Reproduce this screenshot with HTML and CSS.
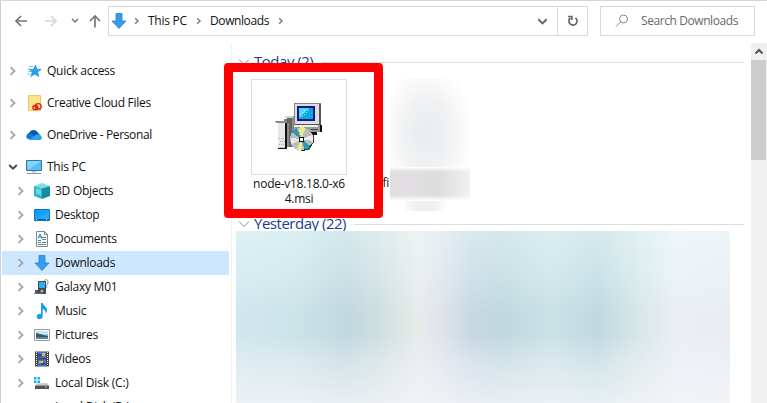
FILE: index.html
```
<!DOCTYPE html>
<html lang="en">
<head>
<meta charset="utf-8">
<title>Downloads</title>
<link rel="stylesheet" href="styles.css">
</head>
<body>
<svg class="defs" width="0" height="0">
  <defs>
    <linearGradient id="blue" x1="0" y1="0" x2="1" y2="1"><stop offset="0" stop-color="#0795f2"/><stop offset="1" stop-color="#32b0ff"/></linearGradient>
    <symbol id="down" viewBox="0 0 16 16"><path d="M5 .5h6v7.500h4L8 15.500 1 8h4z" fill="#389bea" stroke="#2181d3" stroke-width=".8"/></symbol>
    <symbol id="chev" viewBox="0 0 8 10"><path d="M1.500 1.200 5.500 5l-4 3.800" fill="none" stroke="currentColor" stroke-width="1.800"/></symbol>
    <symbol id="chevd" viewBox="0 0 10 8"><path d="M1.200 2 5 5.700 8.800 2" fill="none" stroke="currentColor" stroke-width="1.800"/></symbol>
  </defs>
</svg>
<div class="window">
  <header class="toolbar">
    <div class="history">
      <svg class="back" width="14" height="14" viewBox="0 0 14 14"><path d="M13 7H2M7 2 2 7l5 5"/></svg>
      <svg class="fwd" width="14" height="14" viewBox="0 0 14 14"><path d="M1 7h11M7 2l5 5-5 5"/></svg>
      <svg class="recent" width="8" height="8" viewBox="0 0 8 8"><path d="M1 2l3 3 3-3"/></svg>
      <svg class="up" width="14" height="14" viewBox="0 0 14 14"><path d="M7 13.500V2M2 7l5-5 5 5"/></svg>
    </div>
    <div class="address">
      <svg class="place" width="16" height="16"><use href="#down"/></svg>
      <svg class="sep" width="6" height="8"><use href="#chev"/></svg>
      <span class="crumb pc">This PC</span>
      <svg class="sep" width="6" height="8"><use href="#chev"/></svg>
      <span class="crumb dl">Downloads</span>
      <svg class="sep" width="6" height="8"><use href="#chev"/></svg>
      <svg class="drop" width="11" height="9"><use href="#chevd"/></svg>
      <div class="refresh"><svg width="12" height="12" viewBox="0 0 12 12"><path d="M8.500 2.800A4.100 4.100 0 1 1 3.200 3M1.200 1.500h3.600v3.600"/></svg></div>
    </div>
    <div class="search">
      <svg width="14" height="14" viewBox="0 0 14 14"><circle cx="8.500" cy="5" r="4"/><path d="M5.500 8 1 12.500"/></svg>
      <span>Search Downloads</span>
    </div>
  </header>
  <div class="body">
    <nav class="tree">
      <div class="row top"><svg class="tw" width="8" height="10"><use href="#chev"/></svg>
        <svg class="ic" width="16" height="16" viewBox="0 0 16 16"><path d="m9.500 2 1.300 4.200 4.400.2-3.500 2.700 1 4.400-3.900-2.400-4 2.500L6.200 9 3.500 6.400l4-.1z" fill="#22a3ee" stroke="#1583cc" stroke-width=".6"/><path d="M3 3.500h4M1.500 6h3M2.500 8.500H5M1.500 11H4" stroke="#65c0ef"/></svg>
        <span>Quick access</span></div>
      <div class="row top"><svg class="tw" width="8" height="10"><use href="#chev"/></svg>
        <svg class="ic" width="16" height="16" viewBox="0 0 16 16"><path d="M2.500.5h12v15h-12z" fill="#ffe38d" stroke="#efc75d"/><g fill="none" stroke="#dd2415" stroke-width="1.300"><ellipse cx="9.300" cy="12.500" rx="2.500" ry="2.200"/><ellipse cx="12.200" cy="11.400" rx="3" ry="2.800"/><path d="m9 11 3.500 2.500"/></g></svg>
        <span class="ccf">Creative Cloud Files</span></div>
      <div class="row top"><svg class="tw" width="8" height="10"><use href="#chev"/></svg>
        <svg class="ic" width="16" height="16" viewBox="0 0 16 16"><path d="M1 11a3.500 3.500 0 0 1 2-5 5 5 0 0 1 9-.5L14 8l-6 4z" fill="#0758ae"/><path d="M1 11.500C-.5 9 1.500 6 5 6.500L12 12H3z" fill="#0f79d0"/><path d="M2.500 12.800 9 8.500q3-2.500 5.500-.3c2.500 2 1.500 4.800-1 4.800H3.300z" fill="#27a4ea"/></svg>
        <span class="od">OneDrive - Personal</span></div>
      <div class="row top open"><svg class="tw" width="10" height="8"><use href="#chevd"/></svg>
        <svg class="ic" width="16" height="16" viewBox="0 0 16 16"><path d="M.5 1.500h15v10H.5z" fill="#57bff8" stroke="#36769c"/><path d="M1 2h14L2 11z" fill="#83d6fc"/><path d="M6 12h4v1.500H6z" fill="#b4c1cc"/><path d="M1 14.500h14" stroke="#7c98ac"/></svg>
        <span>This PC</span></div>
      <div class="row"><svg class="tw" width="8" height="10"><use href="#chev"/></svg>
        <svg class="ic" width="16" height="16" viewBox="0 0 16 16"><path d="m0 3 8-3 8 3-8 3z" fill="#7fdce4"/><path d="m0 3 8 2.500V16l-8-3z" fill="#2cb4c6"/><path d="m8 5.500 8-2.500v10l-8 3z" fill="#128da4"/><path d="m2 5 5 1.500v6L2 11z" fill="#68d5e0"/></svg>
        <span>3D Objects</span></div>
      <div class="row"><svg class="tw" width="8" height="10"><use href="#chev"/></svg>
        <svg class="ic" width="16" height="16" viewBox="0 0 16 16"><path d="M.5 2.500h15v11H.5z" fill="url(#blue)" stroke="#087ac7"/><path d="M1 12.500h14" stroke="#075592"/><path d="M2 12.500h2m8 0h2" stroke="#fff" stroke-dasharray="1 1"/></svg>
        <span>Desktop</span></div>
      <div class="row"><svg class="tw" width="8" height="10"><use href="#chev"/></svg>
        <svg class="ic" width="16" height="16" viewBox="0 0 16 16"><path d="M2.500.5h8l3 3v12h-11z" fill="#fff" stroke="#858585"/><path d="M10.500.5v3h3" fill="none" stroke="#858585"/><path d="M4 7.500 6 3l2 4.500M4.500 6h3M8 6.500h4M4 9.500h3M8 11.500h4" stroke="#2685bf" fill="none"/><path d="M8 8.500h4M4 11.500h3M4 13.500h8" stroke="#737f86"/></svg>
        <span>Documents</span></div>
      <div class="row selected"><svg class="tw" width="8" height="10"><use href="#chev"/></svg>
        <svg class="ic" width="16" height="16"><use href="#down"/></svg>
        <span>Downloads</span></div>
      <div class="row"><svg class="tw" width="8" height="10"><use href="#chev"/></svg>
        <svg class="ic" width="16" height="16" viewBox="0 0 16 16"><path d="M10 2c1-2 4-2 4 1s-3 4-1 6" fill="none" stroke="#888"/><path d="M4 2h8v13H4z" fill="#444b50"/><path d="M5 3h6v6H5z" fill="#27aef5"/><path d="M1 11h3v3H1z" fill="#555"/><circle cx="8" cy="12" r="1.600" fill="#a8a8a8"/><path d="M0 14.500h7" stroke="#777"/></svg>
        <span>Galaxy M01</span></div>
      <div class="row"><svg class="tw" width="8" height="10"><use href="#chev"/></svg>
        <svg class="ic" width="16" height="16" viewBox="0 0 16 16"><path d="M7 0h1.700c.5 3 4.300 3.500 4.300 7 0 1.700-.7 2.800-1.500 3.700.5-3-1-4.200-2.800-4.700V13c0 4-6 4-6 .7C2.700 11.500 5 10.500 7 11z" fill="#159fee"/></svg>
        <span>Music</span></div>
      <div class="row"><svg class="tw" width="8" height="10"><use href="#chev"/></svg>
        <svg class="ic" width="16" height="16" viewBox="0 0 16 16"><path d="M.5 2.500h15v11H.5z" fill="#fff" stroke="#999"/><path d="M2 4h12v8H2z" fill="#83bee8"/><path d="M2 4h12v3l-5 1-7-2z" fill="#c9e6f8"/><path d="m2 6 4 1 8 2v1H2z" fill="#315f58"/><path d="M2 10h12v2H2z" fill="#5687aa"/></svg>
        <span>Pictures</span></div>
      <div class="row"><svg class="tw" width="8" height="10"><use href="#chev"/></svg>
        <svg class="ic" width="16" height="16" viewBox="0 0 16 16"><path d="M1 .5h14v15H1z" fill="#454545"/><path d="M2.500 1v14M13.500 1v14" stroke="#eee" stroke-dasharray="1 1"/><path d="M4 1h8v6H4zM4 8.500h8V15H4z" fill="#3d79d9"/><path d="M4 3h4v3H4zM7 12h4v2H7z" fill="#294d92"/><path d="M8 2h3v3H8zM5 10h4v2H5z" fill="#efb929"/><path d="M7 5h2v1H7zM9 10h2v1H9z" fill="#d34c35"/></svg>
        <span>Videos</span></div>
      <div class="row"><svg class="tw" width="8" height="10"><use href="#chev"/></svg>
        <svg class="ic" width="16" height="16" viewBox="0 0 16 16"><path d="M0 2h2.500v2.500H0zM3.500 2H6v2.500H3.500zM0 5.500h2.500V8H0zM3.500 5.500H6V8H3.500z" fill="#12b3ef"/><path d="m3 8.500 10-.5 2 2.500H1z" fill="#c8c8c8"/><path d="M1 10.500h14V14H1z" fill="#4f5355"/><path d="M11 12h2" stroke="#5de373"/></svg>
        <span class="disk">Local Disk (C:)</span></div>
      <div class="row"><span class="tw"></span><svg class="ic" width="16" height="16"></svg><span class="disk">Local Disk (D:)</span></div>
    </nav>
    <main class="files">
      <section class="today">
        <h2 class="group"><svg width="12" height="8" viewBox="0 0 12 8"><path d="m1 1.500 5 5 5-5"/></svg><span>Today (2)</span></h2>
        <div class="items">
          <div class="file">
            <div class="thumb">
              <svg width="48" height="48" viewBox="0 0 48 48" shape-rendering="crispEdges">
                <path d="M9 16h3v-3h7v31h-7z" fill="#8b8b8b"/><path d="M12 15h5v29h-3V20h-4z" fill="#666"/><path d="M10 13h8v2h-8z" fill="#d3d3d3"/>
                <path d="M3 19h9v27H3z" fill="#e7e7e7"/><path d="M0 18h12v2H1z" fill="#8b8b8b"/><path d="M10 20h2v26h-2z" fill="#111"/><path d="M3 45h9" stroke="#111" stroke-width="1"/><path d="M4 35h6M5 38h5M4 41h6M5 44h5" stroke="#aaa" stroke-dasharray="1 1"/>
                <path d="M19 0h27v22H19z" fill="#858585"/><path d="M20 1h24v20H20z" fill="#ddd"/><path d="M44 1h2v22H20v-2h24z" fill="#555"/><path d="M22 3h18v15H22z" fill="#11158d"/><path d="M24 5h14v11H24z" fill="#0aa8df"/><path d="M24 5h11L24 15z" fill="#51d7f5"/><path d="m25 12 6-6m-4 8 8-8" stroke="#9af2ff" stroke-dasharray="1 2"/>
                <path d="M19 22h26v7H19z" fill="#9c9c9c"/><path d="M19 22h24v2H19z" fill="#eee"/><path d="M45 22h2v7h-5v3h-8v-3h11z" fill="#111"/><path d="M36 26h7" stroke="#444"/>
                <circle cx="26.500" cy="36" r="11.500" fill="#bcbcbc"/><path d="m26.500 36-3-11q4-2 7 0z" fill="#efe890"/><path d="m26.500 36-10-7 5-4z" fill="#269ca8"/><path d="m26.500 36 3 11h5l2-3z" fill="#269fa8"/><path d="m26.500 36-5 10 6 1.500z" fill="#eee793"/><path d="m26.500 36 11-4v6z" fill="#eee"/><path d="m26.500 36-11-1 1 6z" fill="#e5e5e5"/><path d="M37 31h1v9l-5 6-7 2" fill="none" stroke="#333"/><path d="M24 34h5v5h-5z" fill="#111"/><path d="M25 35h3v3h-3z" fill="#fff"/>
              </svg>
            </div>
            <p>node-v18.18.0-x6<br>4.msi</p>
          </div>
          <div class="file second"><span class="frag">fi</span><div class="redact"><i class="haze"></i><i class="label"></i><i class="tail"></i></div></div>
        </div>
        <div class="callout"></div>
      </section>
      <section class="yesterday">
        <h2 class="group"><svg width="12" height="8" viewBox="0 0 12 8"><path d="m1 1.500 5 5 5-5"/></svg><span>Yesterday (22)</span></h2>
        <div class="mosaic"></div>
      </section>
    </main>
    <div class="scroll"><svg width="10" height="8" viewBox="0 0 10 8"><path d="m1.500 5.500 3.500-3.500 3.500 3.500"/></svg><div class="bar"></div></div>
  </div>
</div>
</body>
</html>
```
FILE: styles.css
```
* { box-sizing: border-box; }
body { margin: 0; overflow: hidden; background: #fff; color: #111; font: 12px/16px "Open Sans", "Noto Sans", sans-serif; letter-spacing: -.27px; }
svg { flex: none; display: block; }
.defs { position: absolute; }
.window { width: 767px; height: 403px; border-top: 1px solid #d6d6d6; border-left: 1px solid #cfcfcf; overflow: hidden; }
.toolbar { height: 42px; display: flex; padding-top: 5px; }
.history { width: 107px; height: 30px; display: flex; align-items: center; padding-left: 13px; fill: none; stroke: #777; stroke-width: 1.7; }
.fwd { margin-left: 16px; stroke: #d7d7d7; }
.recent { margin-left: 13px; stroke-width: 1.5; }
.up { margin-left: 9px; }
.address { width: 480px; height: 30px; border: 1px solid #d9d9d9; display: flex; align-items: center; }
.place { margin-left: 2px; }
.sep { color: #777; }
.place + .sep { margin-left: 7px; }
.crumb { white-space: nowrap; }
.pc { width: 56px; padding-left: 8px; }
.dl { width: 76px; padding-left: 8px; letter-spacing: -.4px; }
.drop { margin-left: auto; margin-right: 9px; color: #666; }
.refresh { width: 30px; height: 28px; border-left: 1px solid #d9d9d9; display: grid; place-items: center; fill: none; stroke: #666; stroke-width: 1.7; }
.search { width: 155px; height: 30px; margin-left: 12px; border: 1px solid #d9d9d9; display: flex; align-items: center; padding-left: 14px; gap: 12px; color: #686868; fill: none; stroke: #888; white-space: nowrap; letter-spacing: -.42px; }
.search span { stroke: none; }
.body { display: flex; height: 360px; }
.tree { width: 230px; padding-top: 16px; flex: none; overflow: hidden; }
.row { height: 24px; display: flex; align-items: center; padding-left: 15px; margin: 0 2px 0 1px; white-space: nowrap; }
.row.top { padding-left: 7px; margin-bottom: 8px; }
.row.open { margin-bottom: 0; }
.tw { color: #a5a5a5; width: 8px; margin-right: 9px; flex: none; }
.row.open .tw { width: 10px; margin-left: -1px; margin-right: 8px; color: #444; }
.ic { margin-right: 5px; }
.od { letter-spacing: -.36px; }
.disk { letter-spacing: -.2px; }
.row.selected { background: #cde7ff; }
.files { width: 520px; border-left: 1px solid #f2f2f2; padding-left: 6px; }
.today { position: relative; height: 162px; padding-top: 9px; }
.group { margin: 0; height: 20px; display: flex; align-items: center; gap: 4px; color: #1e3c91; font-size: 15px; line-height: 20px; font-weight: 400; letter-spacing: -.48px; white-space: nowrap; width: 506px; }
.group span { margin-top: -2px; }
.group::after { content: ""; flex: 1; height: 1px; margin-left: 4px; background: #dedede; }
.group svg { fill: none; stroke: #888; }
.items { display: flex; padding-top: 7px; }
.file { margin-left: 8px; width: 106px; }
.thumb { width: 96px; height: 96px; margin-left: 5px; border: 1px solid #dedede; display: grid; place-items: center; }
.file p { margin: 1px 0 0; text-align: center; line-height: 15px; }
.second { margin-left: 25px; display: flex; width: 100px; }
.frag { margin-top: 96px; width: 13px; padding-right: 1px; text-align: right; }
.redact { width: 80px; }
.redact i { display: block; }
.haze { height: 88px; background: radial-gradient(ellipse 48px 72px at 46% 62%, #ebedee 20%, #f1f2f3 50%, #f9f9f9 75%, #fff); }
.label { height: 34px; background: linear-gradient(#fff, transparent 14%, transparent 82%, #fff), linear-gradient(90deg, #e4dce2, #e2e0e2 25%, #dcdcdc 60%, #f1f1f1); }
.tail { height: 10px; width: 40px; margin-left: 15px; background: linear-gradient(90deg, #fafafa, #f0f0f0 30%, #f0f0f0 70%, #fafafa); }
.callout { position: absolute; left: -14px; top: 20px; width: 159px; height: 155px; border: 9px solid #f00; border-radius: 4px; }
.yesterday { padding-top: 9px; }
.mosaic { width: 494px; height: 180px; margin: -3px 0 0 -2px; position: relative; background: linear-gradient(rgba(240,255,255,.42), rgba(240,255,255,.2) 28%, transparent 45%, transparent 58%, rgba(241,243,247,.4) 72%, rgba(243,244,247,.88)), linear-gradient(90deg, #d0e7ee, #cbe4e8 12%, #c0d8df 22%, #cfdfe0 29%, #e9ebea 37%, #e1e4ec 41%, #c7d8e3 48%, #bfd9df 54%, #cae2e6 64%, #bedae1 73%, #d6e6e6 81%, #ebeff4 89%, #e9edf4); }
.scroll { width: 16px; height: 360px; background: #f0f0f0; fill: none; stroke: #555; stroke-width: 2; }
.scroll svg { margin: 5px 3px 4px; }
.bar { width: 15px; height: 100px; background: #cdcdcd; }
```
